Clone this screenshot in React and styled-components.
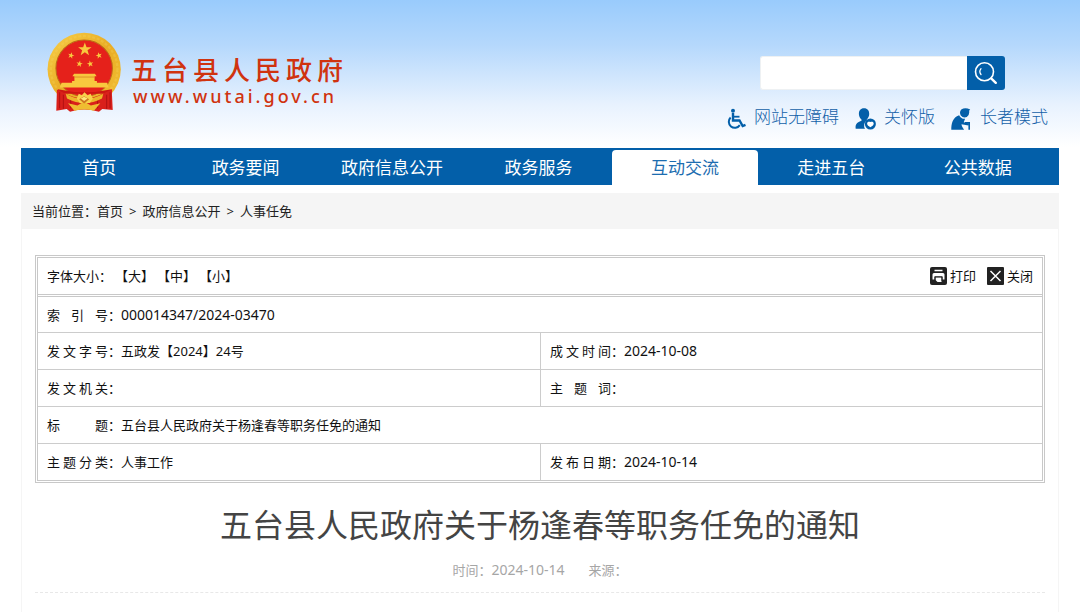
import React from "react";
import styled, { createGlobalStyle } from "styled-components";

const sans = `"Noto Sans", "Noto Sans CJK SC", sans-serif`;
const blue = "#035fa9";

const GlobalStyle = createGlobalStyle`
  * { box-sizing: border-box; }
  body {
    margin: 0;
    background: #fff linear-gradient(#99cbfc 0, #b5d8fc 45px, #e8f2fe 105px, #fff 147px) no-repeat;
    color: #111;
    font: 13px/20px ${sans};
  }
  a { color: inherit; text-decoration: none; }
  button, input { font: inherit; }
`;

const Page = styled.div`
  padding: 0 21px;
`;

const Header = styled.header`
  display: flex;
  justify-content: space-between;
  align-items: flex-start;
  height: 148px;
  padding-left: 26px;
`;

const Brand = styled.a`
  display: flex;
  gap: 9px;
  padding-top: 32px;
  color: #d0330f;
`;

const BrandText = styled.div`
  padding-top: 22px;
`;

const BrandName = styled.div`
  font-size: 26px;
  font-weight: 500;
  line-height: 32px;
  letter-spacing: 5px;
`;

const BrandUrl = styled.div`
  padding-left: 2px;
  font-size: 18px;
  font-weight: 500;
  line-height: 20px;
  letter-spacing: 3px;
`;

const Tools = styled.div`
  display: flex;
  flex-direction: column;
  align-items: flex-end;
  gap: 14px;
  padding: 56px 11px 0 0;
`;

const Search = styled.form`
  display: flex;
  align-items: flex-end;
  margin-right: 43px;
`;

const SearchInput = styled.input`
  width: 207px;
  height: 34px;
  padding: 0 8px;
  border: 1px solid #eef1f3;
  border-right: 0;
  border-radius: 3px 0 0 3px;
  background: #fff;
  outline: 0;
`;

const SearchButton = styled.button`
  display: grid;
  place-items: center;
  width: 38px;
  height: 34px;
  padding: 0;
  border: 0;
  border-radius: 0 3px 3px 0;
  background: ${blue};
`;

const Modes = styled.nav`
  display: flex;
  gap: 16px;
`;

const ModeLink = styled.a`
  display: flex;
  align-items: center;
  gap: 8px;
  color: #1260a8;
  font-size: 17px;
  font-weight: 300;
  line-height: 24px;

  svg { margin-top: 4px; }
`;

const MainNav = styled.nav`
  display: flex;
  height: 37px;
  padding: 0 8px 0 5px;
  background: ${blue};
`;

const NavLink = styled.a`
  flex: 1;
  margin-top: 2px;
  border-radius: 4px 4px 0 0;
  background: ${(p) => (p.$active ? "#fff" : "transparent")};
  color: ${(p) => (p.$active ? "#1d6db0" : "#fff")};
  font-size: 17px;
  line-height: 35px;
  text-align: center;
`;

const Breadcrumb = styled.nav`
  display: flex;
  gap: 6px;
  margin-top: 8px;
  padding: 8px 11px;
  background: #f5f5f5;
  color: #222;
`;

const Body = styled.main`
  padding: 26px 13px 19px;
  border: 1px solid #f5f5f5;
  border-width: 0 1px;
`;

const Frame = styled.section`
  border: 3px double #c8c8c8;
`;

const Toolbar = styled.div`
  display: flex;
  justify-content: space-between;
  align-items: center;
  height: 39px;
  padding: 0 9px;
  border-bottom: 3px double #c8c8c8;
`;

const ToolGroup = styled.div`
  display: flex;
  gap: ${(p) => p.$gap}px;
`;

const PlainButton = styled.button`
  display: flex;
  align-items: center;
  gap: 3px;
  padding: 0;
  border: 0;
  background: none;
  color: inherit;
`;

const InfoTable = styled.table`
  width: 100%;
  table-layout: fixed;
  border-spacing: 0;
`;

const InfoRow = styled.tr`
  height: 37px;

  &:first-child, &:last-child { height: 36px; }
  &:not(:last-child) > td { border-bottom: 1px solid #ccc; }
`;

const InfoCell = styled.td`
  padding: 0 9px;

  & + & { border-left: 1px solid #ccc; }
`;

const Field = styled.div`
  display: flex;
`;

const FieldLabel = styled.span`
  width: 61px;
  text-align: justify;
  text-align-last: justify;
`;

const Figures = styled.span`
  font-size: 14px;
`;

const Title = styled.h1`
  margin: 18px 0 0;
  color: #444;
  font-size: 32px;
  font-weight: 400;
  line-height: 48px;
  text-align: center;
`;

const Meta = styled.div`
  display: flex;
  justify-content: center;
  gap: 24px;
  margin-top: 11px;
  padding-bottom: 12px;
  border-bottom: 1px dashed #e8e8e8;
  color: #a6a6a6;
`;

const STAR = "M0-10 2.4-3.2 9.5-3.1 3.8 1.2 5.9 8.1 0 4-5.9 8.1-3.8 1.2-9.5-3.1-2.4-3.2Z";

const Emblem = () => (
  <svg width="75" height="80" viewBox="21 20 222 238" aria-hidden="true">
    <defs>
      <linearGradient id="gold" x2="1" y2="1">
        <stop offset="0" stopColor="#f8d04a" />
        <stop offset=".5" stopColor="#e9ac25" />
        <stop offset="1" stopColor="#f3c033" />
      </linearGradient>
    </defs>
    <circle cx="131" cy="131" r="109" fill="url(#gold)" />
    <circle cx="131" cy="131" r="99" fill="none" stroke="#f9dc62" strokeWidth="7" strokeDasharray="9 5" opacity=".25" />
    <circle cx="131" cy="128" r="84" fill="#e5211b" stroke="#bd6b16" strokeWidth="3" />
    <g fill="#f8c83e">
      <path d={STAR} transform="translate(133 72) scale(2.1)" />
      <path d={STAR} transform="translate(92 90) rotate(15)" />
      <path d={STAR} transform="translate(175 90) rotate(-15)" />
      <path d={STAR} transform="translate(117 115) rotate(10)" />
      <path d={STAR} transform="translate(149 115) rotate(-10)" />
      <path d="M101 144h62l5 8h-6v14h7v5h30l5 14H58l6-14h31v-5h7v-14h-6Z" />
    </g>
    <path d="M102 154h60" stroke="#d47b1e" strokeWidth="2" />
    <path d="M53 190q78 18 160 0v14H53Z" fill="#cc1712" />
    <path d="M50 191 76 204q54 27 110 0l27-13 3 61-31-3-10 8q-45-13-86 0l-10-8-31 5Z" fill="#d9201b" />
    <path d="M58 199v48M69 207v42M198 207v42M208 199v48M91 221v26M171 221v26" stroke="#b01012" strokeWidth="3" />
    <path d="M76 204q54 31 112 0l-4 14q-52 27-104 0Z" fill="#ecb52b" />
    <path d="m109 218 6-14 9 4 8-9 9 9 9-4 7 14-9 13h-30Z" fill="#f8d24c" />
    <path d="m83 232 28 7 20-12 20 12 28-7-19 22q-28-7-58 0Z" fill="#efbd31" />
    <path d="m116 220 15-9 15 9-15 13Z" fill="#cf7820" />
    <path d="m121 218 10-5 10 5-10 7Z" fill="#ffe77a" />
  </svg>
);

const SearchIcon = () => (
  <svg width="24" height="24" viewBox="0 0 24 24" fill="none" stroke="#fff" strokeLinecap="round" aria-hidden="true">
    <circle cx="10.5" cy="10.8" r="9" strokeWidth="1.6" />
    <path d="m17.4 17.6 4.4 4.2" strokeWidth="2.4" />
    <path d="M7 7.7a4.6 4.6 0 0 0 0 5.800" strokeWidth="1.3" />
  </svg>
);

const WheelchairIcon = () => (
  <svg width="20" height="22" viewBox="0 0 20 22" fill="none" stroke={blue} aria-hidden="true">
    <circle cx="7" cy="2.700" r="2" fill={blue} stroke="none" />
    <path d="M7 5v7.500h6.500l3.200 5.600 2.800-1.200" strokeWidth="2.400" />
    <path d="M7 8.700h6.500" strokeWidth="1.800" />
    <path d="M4.600 9.500a6 6 0 1 0 9.200 7.600" strokeWidth="2" />
  </svg>
);

const CareIcon = () => (
  <svg width="21" height="22" viewBox="0 0 21 22" fill={blue} aria-hidden="true">
    <path d="M9 .3c3.6 0 5.4 2.6 5.2 5.9-.2 2.4-1.2 4-2.4 5.2v1.2a5.9 5.9 0 0 0-1.8 8.1H.7c-.5-4 .5-6 5.8-7.9v-1.4C5 10.100 4 8.500 3.900 6.200 3.700 2.900 5.500.3 9 .3Z" />
    <circle cx="15.4" cy="16" r="5.500" />
    <path d="M15.400 19.200c-2.300-1.400-3.300-2.400-3.300-3.800 0-1.700 2-2 3.300-1.300 1.300-.7 3.300-.4 3.300 1.300 0 1.400-1 2.400-3.300 3.800Z" fill="#fff" />
  </svg>
);

const ElderIcon = () => (
  <svg width="21" height="22" viewBox="0 0 21 22" fill={blue} aria-hidden="true">
    <path d="M10.300 1.500Q14-.8 19.200 1.400l-1.100 1.300q.8 4.300-2.300 6.300-3.500 1.400-6-1.400-1.800-3.700.5-6.100Z" />
    <path d="M8.100 7.200c1.700 3 3.400 3.800 6 3.600l-1.400 3.400 5.500 1.200-.7 2-7-1.200c.2 2.500 1.600 3.500 2.600 5.500H.3C.2 15.500 1.700 9.500 8.100 7.200Z" />
    <path d="M14 14.800h4.200v6.900" fill="none" stroke={blue} strokeWidth="1.600" />
  </svg>
);

const PrintIcon = () => (
  <svg width="17" height="18" viewBox="0 0 17 18" aria-hidden="true">
    <rect width="17" height="18" rx="2" fill="#222" />
    <path d="M4.500 3.500h8" stroke="#fff" strokeWidth="1.500" />
    <path d="M4 6h9q1.500 0 1.500 1.500v5h-2V10h-8v2.500h-2v-5Q2.500 6 4 6Z" fill="#fff" />
    <path d="M5.500 10.500h6v4.500H7.500l-2-2Z" fill="#fff" />
    <path d="M4.500 9.700h8M5 10v4m7-4v4" stroke="#222" />
  </svg>
);

const CloseIcon = () => (
  <svg width="17" height="18" viewBox="0 0 17 18" aria-hidden="true">
    <rect width="17" height="18" rx="1" fill="#222" />
    <path d="m3.500 4 10 10m0-10-10 10" stroke="#fff" strokeWidth="1.500" />
  </svg>
);

const NAV = ["首页", "政务要闻", "政府信息公开", "政务服务", "互动交流", "走进五台", "公共数据"];
const MODES = [
  ["网站无障碍", WheelchairIcon],
  ["关怀版", CareIcon],
  ["长者模式", ElderIcon],
];
const INFO = [
  [{ label: "索引号", figures: "000014347/2024-03470" }],
  [{ label: "发文字号", text: "五政发【2024】24号" }, { label: "成文时间", figures: "2024-10-08" }],
  [{ label: "发文机关" }, { label: "主题词" }],
  [{ label: "标题", text: "五台县人民政府关于杨逢春等职务任免的通知" }],
  [{ label: "主题分类", text: "人事工作" }, { label: "发布日期", figures: "2024-10-14" }],
];

export default function App() {
  return (
    <>
      <GlobalStyle />
      <Page lang="zh-CN">
        <Header>
          <Brand href="#">
            <Emblem />
            <BrandText>
              <BrandName>五台县人民政府</BrandName>
              <BrandUrl>www.wutai.gov.cn</BrandUrl>
            </BrandText>
          </Brand>
          <Tools>
            <Search role="search" onSubmit={(e) => e.preventDefault()}>
              <SearchInput type="text" aria-label="搜索" />
              <SearchButton type="submit" aria-label="搜索">
                <SearchIcon />
              </SearchButton>
            </Search>
            <Modes>
              {MODES.map(([name, Icon]) => (
                <ModeLink href="#" key={name}>
                  <Icon />
                  {name}
                </ModeLink>
              ))}
            </Modes>
          </Tools>
        </Header>
        <MainNav>
          {NAV.map((name) => (
            <NavLink href="#" key={name} $active={name === "互动交流"}>
              {name}
            </NavLink>
          ))}
        </MainNav>
        <Breadcrumb>
          <div>
            当前位置：<a href="#">首页</a>
          </div>
          <span>&gt;</span>
          <a href="#">政府信息公开</a>
          <span>&gt;</span>
          <a href="#">人事任免</a>
        </Breadcrumb>
        <Body>
          <Frame>
            <Toolbar>
              <ToolGroup $gap={3}>
                <span>字体大小：</span>
                <PlainButton type="button">【大】</PlainButton>
                <PlainButton type="button">【中】</PlainButton>
                <PlainButton type="button">【小】</PlainButton>
              </ToolGroup>
              <ToolGroup $gap={11}>
                <PlainButton type="button">
                  <PrintIcon />
                  打印
                </PlainButton>
                <PlainButton type="button">
                  <CloseIcon />
                  关闭
                </PlainButton>
              </ToolGroup>
            </Toolbar>
            <InfoTable>
              <tbody>
                {INFO.map((cells) => (
                  <InfoRow key={cells[0].label}>
                    {cells.map((c) => (
                      <InfoCell key={c.label} colSpan={cells.length === 1 ? 2 : 1}>
                        <Field>
                          <FieldLabel>{c.label}</FieldLabel>：{c.text}
                          {c.figures && <Figures>{c.figures}</Figures>}
                        </Field>
                      </InfoCell>
                    ))}
                  </InfoRow>
                ))}
              </tbody>
            </InfoTable>
          </Frame>
          <Title>五台县人民政府关于杨逢春等职务任免的通知</Title>
          <Meta>
            <span>
              时间：<Figures>2024-10-14</Figures>
            </span>
            <span>来源：</span>
          </Meta>
        </Body>
      </Page>
    </>
  );
}
